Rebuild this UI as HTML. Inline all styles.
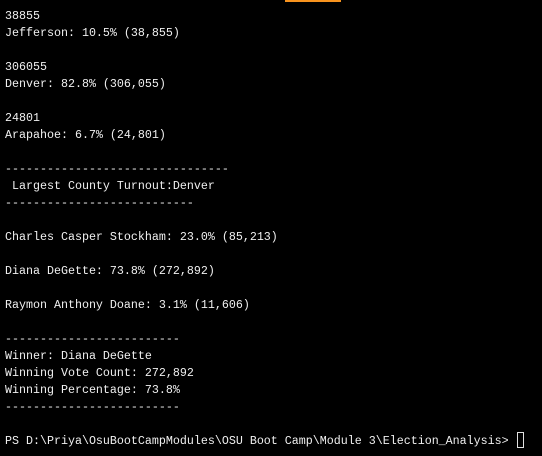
<!DOCTYPE html>
<html><head><meta charset="utf-8"><style>
html,body{margin:0;padding:0;background:#000;width:542px;height:456px;overflow:hidden}
pre{margin:0;position:absolute;left:5px;top:8px;font-family:"Liberation Mono",monospace;font-size:11.67px;line-height:17px;color:#f0f0f0;white-space:pre}
.bar{position:absolute;left:285px;top:0;width:56px;height:2px;background:#f7931e}
.cur{position:absolute;left:517px;top:432px;width:7px;height:16px;border:1px solid #e0e0e0;box-sizing:border-box}
</style></head><body>
<div class="bar"></div>
<pre>38855
Jefferson: 10.5% (38,855)

306055
Denver: 82.8% (306,055)

24801
Arapahoe: 6.7% (24,801)

--------------------------------
 Largest County Turnout:Denver
---------------------------

Charles Casper Stockham: 23.0% (85,213)

Diana DeGette: 73.8% (272,892)

Raymon Anthony Doane: 3.1% (11,606)

-------------------------
Winner: Diana DeGette
Winning Vote Count: 272,892
Winning Percentage: 73.8%
-------------------------

PS D:\Priya\OsuBootCampModules\OSU Boot Camp\Module 3\Election_Analysis&gt; </pre>
<div class="cur"></div>
</body></html>
